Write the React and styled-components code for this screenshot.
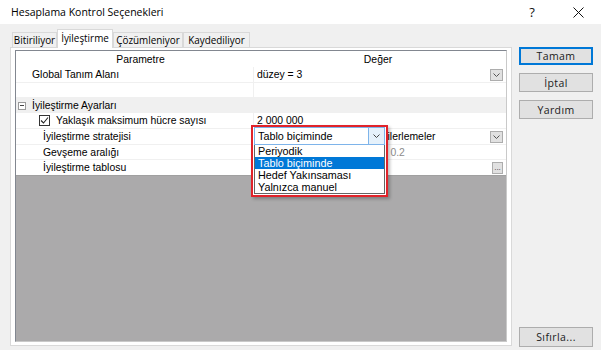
import React from "react";
import styled, { createGlobalStyle } from "styled-components";

const GlobalStyle = createGlobalStyle`
  html, body {
    margin: 0;
    padding: 0;
  }
  body {
    background: #f0f0f0;
    font-family: "Liberation Sans", Arial, sans-serif;
  }
`;

const Window = styled.div`
  width: 601px;
  height: 350px;
  display: flex;
  flex-direction: column;
  background: #f0f0f0;
  overflow: hidden;
`;

const TitleBar = styled.div`
  height: 24px;
  flex: none;
  background: #fff;
  display: flex;
  align-items: center;
  padding-left: 11px;
`;

const Title = styled.div`
  flex: 1;
  font-family: "Open Sans", sans-serif;
  font-size: 10.5px;
  color: #000;
`;

const TitleButton = styled.div`
  width: 46px;
  height: 24px;
  display: flex;
  align-items: center;
  justify-content: center;
  font-family: "Open Sans", sans-serif;
  font-size: 13px;
  color: #111;
`;

const Body = styled.div`
  flex: 1;
  display: flex;
  padding-left: 10px;
  min-height: 0;
`;

const LeftSide = styled.div`
  width: 502px;
  display: flex;
  flex-direction: column;
  padding-top: 5px;
  padding-bottom: 4px;
`;

const TabStrip = styled.div`
  display: flex;
  align-items: flex-end;
  height: 18px;
  padding-left: 2px;
  position: relative;
  z-index: 1;
`;

const Tab = styled.div`
  box-sizing: border-box;
  width: ${(p) => p.$w}px;
  height: ${(p) => (p.$active ? 19 : 15)}px;
  margin-bottom: ${(p) => (p.$active ? -1 : 0)}px;
  border: 1px solid #d9d9d9;
  border-bottom: none;
  background: ${(p) => (p.$active ? "#fff" : "#f0f0f0")};
  display: flex;
  align-items: center;
  justify-content: center;
  padding-bottom: ${(p) => (p.$active ? 3 : 0)}px;
  font-family: "Open Sans", sans-serif;
  font-size: 9.9px;
  color: #000;
  white-space: nowrap;
`;

const Panel = styled.div`
  flex: 1;
  display: flex;
  box-sizing: border-box;
  border: 1px solid #d9d9d9;
  background: #fff;
  padding: 2px 4px 3px 4px;
`;

const Grid = styled.div`
  flex: 1;
  display: flex;
  flex-direction: column;
  border: 1px solid #828790;
  border-right-color: #c9c9c9;
  border-bottom-color: #c9c9c9;
  background: #fff;
  font-size: 10.4px;
  color: #000;
`;

const Row = styled.div`
  box-sizing: border-box;
  display: flex;
  height: ${(p) => p.$h}px;
  flex: none;
  background: ${(p) => p.$bg || "#fff"};
  border-bottom: ${(p) => (p.$line ? "1px solid #f0f0f0" : "none")};
`;

const NameCell = styled.div`
  width: 237px;
  flex: none;
  display: flex;
  align-items: center;
  gap: ${(p) => p.$gap || 0}px;
  padding-left: ${(p) => p.$indent || 0}px;
  box-sizing: border-box;
  justify-content: ${(p) => (p.$center ? "center" : "flex-start")};
  white-space: nowrap;
`;

const ValueCell = styled.div`
  flex: 1;
  position: relative;
  display: flex;
  align-items: center;
  justify-content: ${(p) => (p.$center ? "center" : "flex-start")};
  padding-left: ${(p) => (p.$center ? 0 : 3)}px;
  padding-right: 3px;
  border-left: ${(p) => (p.$noDivider ? "none" : "1px solid #f0f0f0")};
  color: ${(p) => (p.$muted ? "#8c8c8c" : "#000")};
  white-space: nowrap;
`;

const ValueText = styled.span`
  flex: 1;
  overflow: hidden;
`;

const SmallButton = styled.div`
  box-sizing: border-box;
  width: ${(p) => p.$w || 13}px;
  height: 12px;
  flex: none;
  border: 1px solid #adadad;
  background: #e1e1e1;
  display: flex;
  align-items: center;
  justify-content: center;
  font-size: 8px;
  line-height: 8px;
  color: #333;
`;

const ExpandBox = styled.div`
  box-sizing: border-box;
  width: 8px;
  height: 8px;
  border: 1px solid #9a9a9a;
  background: #fff;
  display: flex;
  align-items: center;
  justify-content: center;
  &::after {
    content: "";
    width: 4px;
    height: 1px;
    background: #444;
  }
`;

const CheckBox = styled.div`
  box-sizing: border-box;
  width: 11px;
  height: 11px;
  border: 1px solid #333;
  background: #fff;
  display: flex;
  align-items: center;
  justify-content: center;
`;

const Filler = styled.div`
  flex: 1;
  background: #abaaab;
  border-top: 1px solid #a0a0a0;
`;

const DropOverlay = styled.div`
  position: absolute;
  left: -3px;
  top: -4px;
  z-index: 5;
  box-sizing: border-box;
  width: 137px;
  border: 2px solid #e1232a;
  background: #fff;
  padding: 0 1px 1px 1px;
  box-shadow: 2px 2px 3px rgba(0, 0, 0, 0.25);
  display: flex;
  flex-direction: column;
`;

const Combo = styled.div`
  box-sizing: border-box;
  height: 18px;
  display: flex;
  border: 1px solid #7eb4ea;
  background: #fff;
`;

const ComboText = styled.div`
  flex: 1;
  display: flex;
  align-items: center;
  padding-left: 3px;
  font-size: 10.8px;
`;

const ComboArrow = styled.div`
  width: 15px;
  background: #e5f1fb;
  border-left: 1px solid #7eb4ea;
  display: flex;
  align-items: center;
  justify-content: center;
`;

const OptionList = styled.div`
  border: 1px solid #646464;
  border-top: none;
  background: #fff;
`;

const Option = styled.div`
  height: 12px;
  display: flex;
  align-items: center;
  padding-left: 3px;
  font-size: 10.8px;
  background: ${(p) => (p.$selected ? "#0078d7" : "#fff")};
  color: ${(p) => (p.$selected ? "#fff" : "#000")};
`;

const ButtonColumn = styled.div`
  width: 74px;
  margin-left: 7px;
  display: flex;
  flex-direction: column;
  gap: 8px;
  padding-top: 23px;
  padding-bottom: 3px;
`;

const Button = styled.button`
  box-sizing: border-box;
  width: 74px;
  height: ${(p) => p.$h || 19}px;
  margin: 0;
  padding: 0;
  margin-top: ${(p) => (p.$bottom ? "auto" : "0")};
  border: 1px solid ${(p) => (p.$primary ? "#0078d7" : "#adadad")};
  box-shadow: ${(p) => (p.$primary ? "inset 0 0 0 1px #0078d7" : "none")};
  background: #e1e1e1;
  font-family: "Open Sans", sans-serif;
  font-size: 10.5px;
  letter-spacing: 0.4px;
  color: #1a1a1a;
`;

const Chevron = ({ color = "#555" }) => (
  <svg width="7" height="4" viewBox="0 0 7 4">
    <path d="M0.5 0.5 L3.5 3.5 L6.5 0.5" fill="none" stroke={color} strokeWidth="1" />
  </svg>
);

const CloseIcon = () => (
  <svg width="11" height="11" viewBox="0 0 11 11">
    <path d="M0.5 0.5 L10.5 10.5 M10.5 0.5 L0.5 10.5" stroke="#111" strokeWidth="1" />
  </svg>
);

const CheckIcon = () => (
  <svg width="9" height="9" viewBox="0 0 9 9">
    <path d="M1 4.5 L3.5 7 L8 1.5" fill="none" stroke="#222" strokeWidth="1.1" />
  </svg>
);

const tabs = [
  { label: "Bitiriliyor", w: 45 },
  { label: "İyileştirme", w: 56, active: true },
  { label: "Çözümleniyor", w: 70 },
  { label: "Kaydediliyor", w: 67 },
];

const options = ["Periyodik", "Tablo biçiminde", "Hedef Yakınsaması", "Yalnızca manuel"];

export default function App() {
  return (
    <>
      <GlobalStyle />
      <Window>
        <TitleBar>
          <Title>Hesaplama Kontrol Seçenekleri</Title>
          <TitleButton>?</TitleButton>
          <TitleButton>
            <CloseIcon />
          </TitleButton>
        </TitleBar>
        <Body>
          <LeftSide>
            <TabStrip>
              {tabs.map((t) => (
                <Tab key={t.label} $w={t.w} $active={t.active}>
                  {t.label}
                </Tab>
              ))}
            </TabStrip>
            <Panel>
              <Grid>
                <Row $h={16}>
                  <NameCell $indent={12} $center>
                    Parametre
                  </NameCell>
                  <ValueCell $center $noDivider>
                    Değer
                  </ValueCell>
                </Row>
                <Row $h={16} $line>
                  <NameCell $indent={16}>Global Tanım Alanı</NameCell>
                  <ValueCell>
                    <ValueText>düzey = 3</ValueText>
                    <SmallButton>
                      <Chevron />
                    </SmallButton>
                  </ValueCell>
                </Row>
                <Row $h={15} $line>
                  <NameCell />
                  <ValueCell />
                </Row>
                <Row $h={15} $bg="#f0f0f0">
                  <NameCell $indent={2} $gap={6}>
                    <ExpandBox />
                    İyileştirme Ayarları
                  </NameCell>
                  <ValueCell $noDivider />
                </Row>
                <Row $h={16} $line>
                  <NameCell $indent={23} $gap={6}>
                    <CheckBox>
                      <CheckIcon />
                    </CheckBox>
                    Yaklaşık maksimum hücre sayısı
                  </NameCell>
                  <ValueCell>
                    <ValueText>2 000 000</ValueText>
                  </ValueCell>
                </Row>
                <Row $h={16} $line>
                  <NameCell $indent={27}>İyileştirme stratejisi</NameCell>
                  <ValueCell>
                    <ValueText>Belirtilen zaman adımlarıyla ilerlemeler</ValueText>
                    <SmallButton>
                      <Chevron />
                    </SmallButton>
                    <DropOverlay>
                      <Combo>
                        <ComboText>Tablo biçiminde</ComboText>
                        <ComboArrow>
                          <Chevron color="#444" />
                        </ComboArrow>
                      </Combo>
                      <OptionList>
                        {options.map((o) => (
                          <Option key={o} $selected={o === "Tablo biçiminde"}>
                            {o}
                          </Option>
                        ))}
                      </OptionList>
                    </DropOverlay>
                  </ValueCell>
                </Row>
                <Row $h={15} $line>
                  <NameCell $indent={27}>Gevşeme aralığı</NameCell>
                  <ValueCell $muted>
                    <ValueText>Otomatik gevşeme katsayısı 0.2</ValueText>
                  </ValueCell>
                </Row>
                <Row $h={15}>
                  <NameCell $indent={27}>İyileştirme tablosu</NameCell>
                  <ValueCell>
                    <ValueText />
                    <SmallButton $w={11}>...</SmallButton>
                  </ValueCell>
                </Row>
                <Filler />
              </Grid>
            </Panel>
          </LeftSide>
          <ButtonColumn>
            <Button $primary $h={18}>Tamam</Button>
            <Button>İptal</Button>
            <Button>Yardım</Button>
            <Button $bottom $h={20}>Sıfırla...</Button>
          </ButtonColumn>
        </Body>
      </Window>
    </>
  );
}
